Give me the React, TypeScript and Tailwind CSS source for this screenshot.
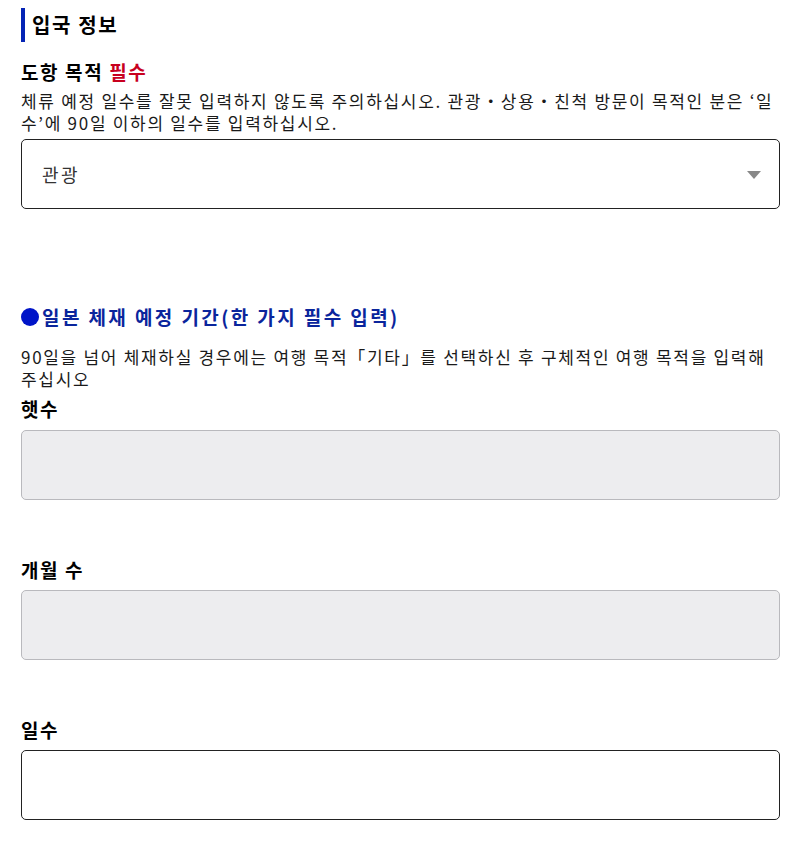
export default function App() {
  const font = { fontFamily: '"Noto Sans CJK KR", "Noto Sans", sans-serif' };
  return (
    <div style={font} className="w-[787px] min-h-[868px] bg-white pl-[21px] pr-[7px] pt-[8px] pb-[48px] text-[#111]">
      <h2 className="border-l-4 border-[#0524b5] pl-[7px] text-[20px] font-bold leading-[34px] tracking-[1.6px] text-black">입국 정보</h2>

      {/* 도항 목적 */}
      <div className="mt-[18px] text-[19px] font-bold leading-[24px] tracking-[1.6px] text-black">
        도항 목적 <span className="text-[#c8001e]">필수</span>
      </div>
      <p className="mt-[6px] text-[17px] leading-[22px] tracking-[1.7px] text-[#1a1a1a]">
        체류 예정 일수를 잘못 입력하지 않도록 주의하십시오. 관광・상용・친척 방문이 목적인 분은 ‘일수’에 90일 이하의 일수를 입력하십시오.
      </p>
      <div className="relative mt-[5px] flex h-[70px] items-center rounded-[5px] border border-[#222] pl-[20px]">
        <span className="text-[18px] tracking-[2.5px] text-[#333]">관광</span>
        <svg className="absolute right-[18px] top-[31px]" width="14" height="8" viewBox="0 0 14 8">
          <path d="M0 0 H14 L7 8 Z" fill="#888" />
        </svg>
      </div>

      {/* 일본 체재 예정 기간 */}
      <div className="mt-[95px] flex items-center gap-[3px] text-[19px] font-bold leading-[26px] tracking-[2.4px] text-[#0a259c]">
        <span className="inline-block h-[18px] w-[18px] shrink-0 rounded-full bg-[#0014c8]" />
        <span>일본 체재 예정 기간(한 가지 필수 입력)</span>
      </div>
      <p className="mt-[16px] text-[17px] leading-[22px] tracking-[1.7px] text-[#1a1a1a]">
        90일을 넘어 체재하실 경우에는 여행 목적「기타」를 선택하신 후 구체적인 여행 목적을 입력해 주십시오
      </p>

      <div className="mt-[7px] text-[19px] font-bold leading-[24px] tracking-[1.6px] text-black">햇수</div>
      <div className="mt-[9px] h-[70px] rounded-[5px] border border-[#b9b9bd] bg-[#ededef]" />

      <div className="mt-[58px] text-[19px] font-bold leading-[24px] tracking-[1.6px] text-black">개월 수</div>
      <div className="mt-[8px] h-[70px] rounded-[5px] border border-[#b9b9bd] bg-[#ededef]" />

      <div className="mt-[58px] text-[19px] font-bold leading-[24px] tracking-[1.6px] text-black">일수</div>
      <div className="mt-[8px] h-[70px] rounded-[5px] border border-[#222] bg-white" />
    </div>
  );
}
